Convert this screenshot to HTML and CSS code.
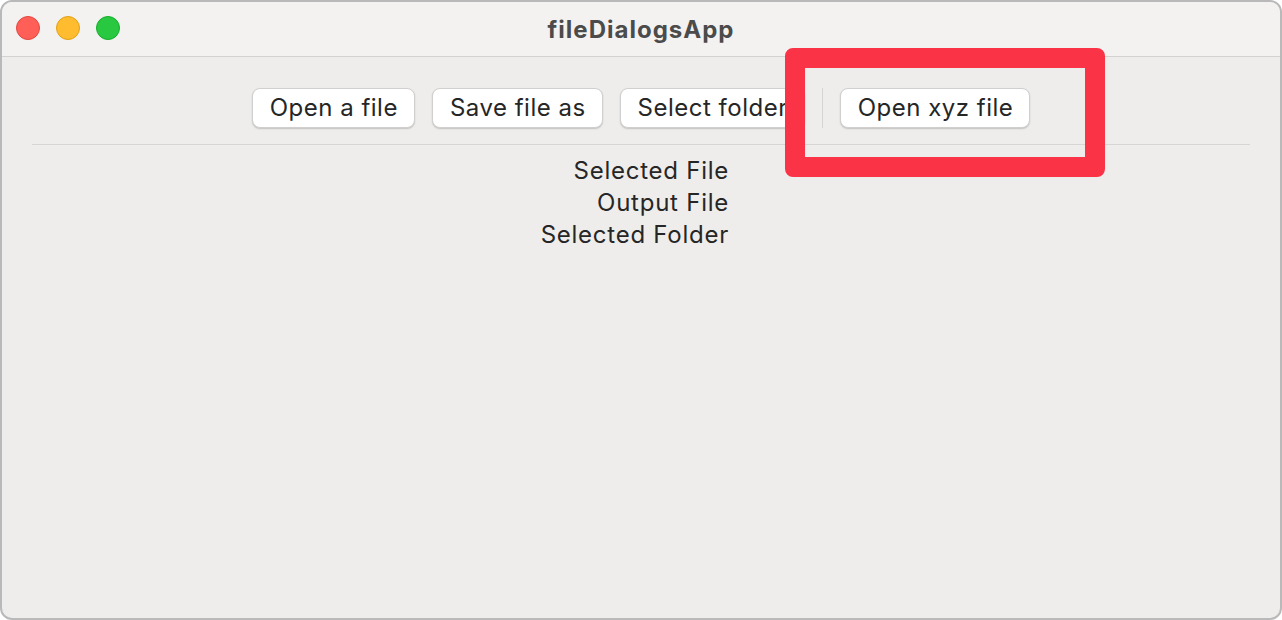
FILE: index.html
```html
<!DOCTYPE html>
<html>
<head>
<meta charset="utf-8">
<link rel="stylesheet" href="styles.css">
</head>
<body>
<div class="window">
  <div class="titlebar">
    <div class="lights">
      <span class="light red"></span>
      <span class="light yellow"></span>
      <span class="light green"></span>
    </div>
    <div class="title">fileDialogsApp</div>
  </div>
  <div class="content">
    <div class="toolbar">
      <button class="btn">Open a file</button>
      <button class="btn">Save file as</button>
      <button class="btn">Select folder</button>
      <span class="vsep"></span>
      <button class="btn">Open xyz file</button>
    </div>
    <div class="hline"></div>
    <div class="labels">
      <div>Selected File</div>
      <div>Output File</div>
      <div>Selected Folder</div>
    </div>
  </div>
  <div class="highlight"></div>
</div>
</body>
</html>
```
FILE: styles.css
```css
html, body {
  margin: 0;
  padding: 0;
  background: #ffffff;
}
body {
  width: 1282px;
  height: 620px;
  overflow: hidden;
  font-family: Inter, "Liberation Sans", sans-serif;
}
.window {
  position: relative;
  box-sizing: border-box;
  width: 1282px;
  height: 620px;
  border: 2px solid #b9b9b9;
  border-radius: 12px;
  background: #eeedeb;
  overflow: hidden;
}
.titlebar {
  position: relative;
  height: 54px;
  background: #f3f2f1;
  border-bottom: 1px solid #d3d2d0;
  display: flex;
  align-items: center;
  justify-content: center;
}
.lights {
  position: absolute;
  left: 14px;
  top: 14px;
  display: flex;
  gap: 16px;
}
.light {
  width: 24px;
  height: 24px;
  border-radius: 50%;
  box-sizing: border-box;
}
.red { background: #ff5f57; border: 1px solid #e2463f; }
.yellow { background: #febc2e; border: 1px solid #e1a116; }
.green { background: #28c840; border: 1px solid #14ae2b; }
.title {
  font-size: 24px;
  font-weight: 700;
  color: #4b4b4b;
  letter-spacing: 1px;
}
.content {
  padding: 0 30px;
}
.toolbar {
  display: flex;
  justify-content: center;
  align-items: center;
  gap: 17px;
  padding-top: 31px;
  height: 40px;
}
.btn {
  height: 40px;
  box-sizing: border-box;
  padding: 0 16px 0 17px;
  border: 0.5px solid #d0cfcd;
  border-radius: 8px;
  background: #ffffff;
  box-shadow: 0 1px 1.5px rgba(0,0,0,0.18);
  font-family: Inter, "Liberation Sans", sans-serif;
  font-size: 24px;
  letter-spacing: 0.5px;
  color: #262626;
  line-height: 38px;
}
.vsep {
  width: 1px;
  height: 40px;
  background: #d6d5d3;
}
.hline {
  margin-top: 16px;
  height: 1px;
  background: #d7d6d4;
}
.labels {
  width: 697px;
  text-align: right;
  font-size: 24px;
  letter-spacing: 0.75px;
  line-height: 32px;
  color: #262626;
  margin-top: 10px;
}
.highlight {
  position: absolute;
  left: 783px;
  top: 46px;
  width: 280px;
  height: 89px;
  border: 20px solid #fa3446;
  border-radius: 8px;
}
```
